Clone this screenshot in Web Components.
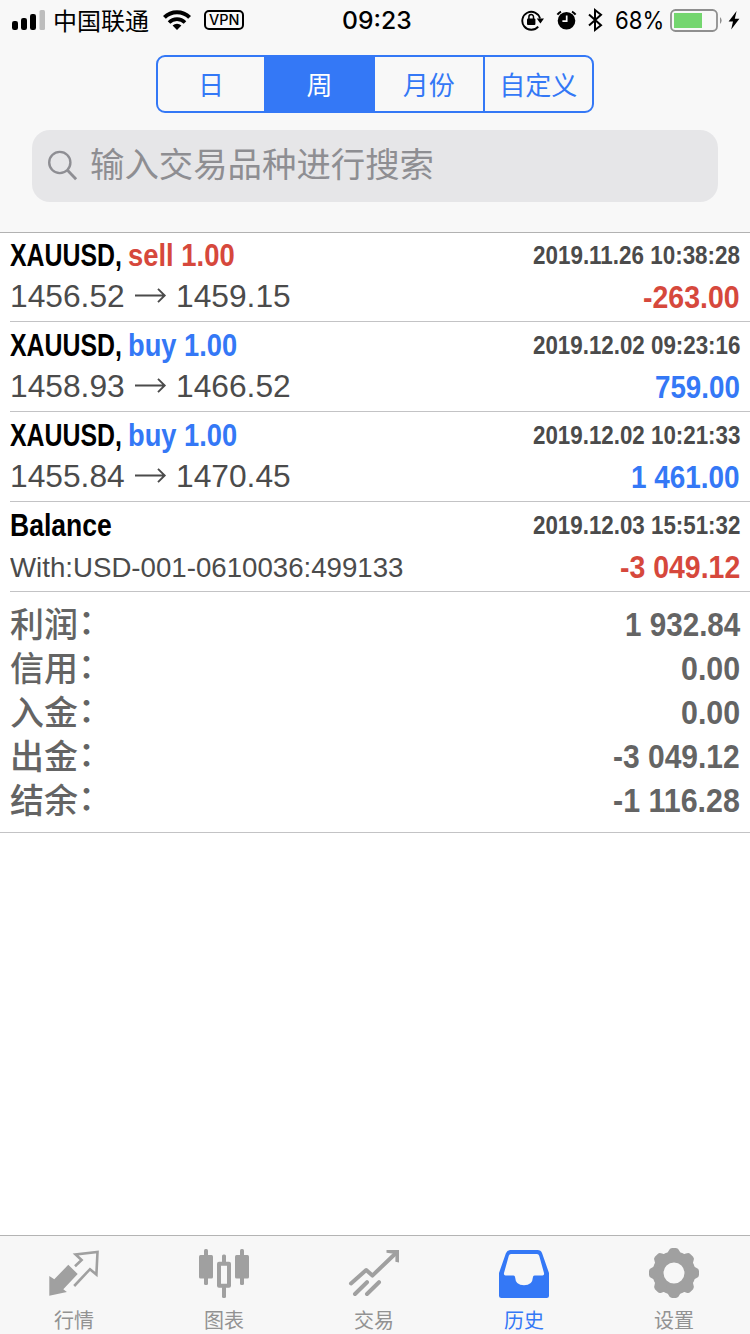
<!DOCTYPE html>
<html lang="zh-CN">
<head>
<meta charset="utf-8">
<title>历史</title>
<style>
html,body{margin:0;height:100%;background:#fff}
body{font-family:"Liberation Sans",Arial,sans-serif;overflow:hidden}
</style>
</head>
<body>
<history-app></history-app>
<script>
const CJK = '"Noto Sans CJK SC",sans-serif';
const fits = new Set();

class Base extends HTMLElement {
  connectedCallback() {
    if (this.shadowRoot) return;
    this.attachShadow({mode: 'open'}).innerHTML = this.render();
  }
  a(n, d = '') { return this.getAttribute(n) ?? d; }
}

/* Text condensed or stretched horizontally to a given advance width. */
class FitText extends Base {
  render() {
    fits.add(this);
    return `<style>:host{display:inline-block;white-space:nowrap;flex:none;width:${this.a('w')}px}
      span{display:inline-block;transform-origin:0 0}</style><span><slot></slot></span>`;
  }
  fit() {
    const s = this.shadowRoot.querySelector('span');
    s.style.transform = `scaleX(${this.a('w') / s.offsetWidth})`;
  }
}
customElements.define('fit-text', FitText);

class StatusBar extends Base {
  render() {
    return `<style>
      :host{display:flex;align-items:center;height:40px;box-sizing:border-box;padding-left:12px;color:#000;font-family:Inter,sans-serif;font-size:24px;line-height:40px}
      svg{flex:none;display:block}
      .cn{font-family:${CJK};margin-left:8px;font-size:24px;line-height:40px;height:40px}
      .vpn{box-sizing:border-box;width:40px;height:20px;border:2px solid #000;border-radius:5px;margin-left:13px;display:flex;justify-content:center;font-size:14px;line-height:16px;font-weight:500}
      .time{margin-left:98px;font-weight:500}
      .time,.pct{line-height:38px;padding-top:2px}
      .pct{margin-left:12px}
    </style>
    <svg width="33" height="40"><rect x="0" y="21" width="6" height="9" rx="2.2"/><rect x="9" y="18" width="6" height="12" rx="2.2"/><rect x="18" y="14" width="6" height="16" rx="2.2"/><rect x="27.5" y="10" width="5.5" height="20" rx="1.5" fill="#bdbdbd"/></svg>
    <fit-text class="cn" w="96">中国联通</fit-text>
    <svg style="margin-left:14px" width="28" height="40" fill="none" stroke="#000" stroke-width="4"><path d="M1.4 17.4a17.8 17.8 0 0 1 25.2 0"/><path d="M6 22.4a11.3 11.3 0 0 1 16 0" stroke-width="3.6"/><path d="M14 30l-4.4-4.4a6.2 6.2 0 0 1 8.8 0z" fill="#000" stroke="none"/></svg>
    <div class="vpn"><fit-text w="31">VPN</fit-text></div>
    <fit-text class="time" w="70">09:23</fit-text>
    <svg style="margin-left:109px" width="23" height="40"><path d="M17.2 26.600A9 9 0 1 1 19 18.500" fill="none" stroke="#000" stroke-width="1.900"/><path d="M15.8 18.400h7.200l-3.600 5z"/><rect x="6" y="18.500" width="8.400" height="6.500" rx="1"/><path d="M7.900 19v-2.100a2.300 2.300 0 0 1 4.600 0v2.100" fill="none" stroke="#000" stroke-width="1.500"/></svg>
    <svg style="margin-left:12px" width="21" height="40"><circle cx="10.5" cy="20.7" r="8.8"/><path d="M1.400 14.600a10 10 0 0 1 3.600-3M19.600 14.600a10 10 0 0 0-3.600-3" fill="none" stroke="#000" stroke-width="2"/><path d="M10.7 15.5v5.600H6.400" fill="none" stroke="#f8f8f8" stroke-width="1.700"/></svg>
    <svg style="margin-left:11px" width="15" height="40" fill="none" stroke="#000" stroke-width="2"><path d="M1 14.6l12 10.6-6 4.8V10l6 4.8L1 25.4"/></svg>
    <fit-text class="pct" w="49">68%</fit-text>
    <svg style="margin-left:6px" width="54" height="40"><rect x="1" y="10" width="46" height="21" rx="4.5" fill="none" stroke="#8f8f8f" stroke-width="1.8"/><rect x="4" y="13" width="28" height="15" fill="#74d66f"/><path d="M50 17q3.4 3.5 0 7z" fill="#8f8f8f"/></svg>
    <svg style="margin-left:4px" width="12" height="40"><path d="M8.6 11L0.6 21.4H5L3.2 29.6 11.4 18.8H6.8z"/></svg>`;
  }
}
customElements.define('status-bar', StatusBar);

class SegmentItem extends Base {
  render() {
    return `<style>
      :host{display:flex;align-items:flex-start;justify-content:center;box-sizing:border-box;height:54px;font:26px/53px ${CJK};color:#3478f6;flex:1}
      :host([selected]){background:#3478f6;color:#fff;flex:0 0 111px}
      :host([divided]){border-left:2px solid #3478f6}
    </style><span><slot></slot></span>`;
  }
}
customElements.define('segment-item', SegmentItem);

class SegmentedControl extends Base {
  render() {
    return `<style>:host{display:flex;box-sizing:border-box;width:438px;height:58px;border:2px solid #3478f6;border-radius:9px;margin:15px auto 0;overflow:hidden}
    ::slotted(:first-child){flex:0 0 106px}</style><slot></slot>`;
  }
}
customElements.define('segmented-control', SegmentedControl);

class SearchField extends Base {
  render() {
    return `<style>
      :host{display:flex;align-items:center;height:72px;margin:17px 32px 0;padding-left:15px;box-sizing:border-box;border-radius:18px;background:#e6e6e8;color:#8e8e92;font:34px/66px ${CJK}}
      svg{margin-right:12px}
      fit-text{height:72px}
    </style><svg width="31" height="32" fill="none" stroke="#8e8e93" stroke-width="2.4"><circle cx="12.8" cy="12.5" r="10.6"/><path d="M20.5 20.3l8.600 9" stroke-width="2.800"/></svg>
    <fit-text w="344"><slot></slot></fit-text>`;
  }
}
customElements.define('search-field', SearchField);

class DealRow extends Base {
  render() {
    const act = this.a('action');
    return `<style>
      :host{display:flex;flex-direction:column;box-sizing:border-box;height:90px;margin-left:10px;padding:3px 10px 0 0;border-bottom:1px solid #c3c3c5;color:#4b4b4b}
      .line{display:flex;justify-content:space-between;height:41px;line-height:40px}
      .head{display:flex;gap:6px;font-size:32px;font-weight:bold;color:#000}
      .date{font-size:26px;font-weight:bold}
      .prices{display:flex;font-size:32px;line-height:40px}
      .prices svg{margin:0 8px 0 10px}
      .note{font-size:28px;line-height:44px}
      .sum{font-size:32px;font-weight:bold;line-height:43px}
      .red{color:#d6483c}.blue{color:#3478f6}
    </style>
    <div class="line"><div class="head"><fit-text w="${this.a('tw')}">${this.a('name')}</fit-text>${act ? `<fit-text class="${this.a('tone')}" w="${this.a('aw')}">${act}</fit-text>` : ''}</div><fit-text class="date" w="207">${this.a('date')}</fit-text></div>
    <div class="line">${this.hasAttribute('from')
      ? `<div class="prices"><fit-text w="115">${this.a('from')}</fit-text><svg width="33" height="40" fill="none" stroke="#4b4b4b" stroke-width="1.9"><path d="M0 19.5h29.500M23 12.800l6.700 6.700-6.700 6.700"/></svg><fit-text w="115">${this.a('to')}</fit-text></div>`
      : `<fit-text class="note" w="393">${this.a('note')}</fit-text>`}<fit-text class="sum ${this.a('result')}" w="${this.a('sw')}">${this.a('sum')}</fit-text></div>`;
  }
}
customElements.define('deal-row', DealRow);

class SummaryRow extends Base {
  render() {
    return `<style>
      :host{display:flex;justify-content:space-between;height:44px;padding:0 10px;color:#646464;line-height:44px}
      .label{font-family:"Liberation Sans",${CJK};font-weight:500;font-size:34px;padding-top:1px;display:flex;height:43px}
      .colon{line-height:38px}
      .value{font-size:34px;font-weight:bold}
    </style><div class="label"><span><slot></slot></span><span class="colon">：</span></div><fit-text class="value" w="${this.a('w')}">${this.a('value')}</fit-text>`;
  }
}
customElements.define('summary-row', SummaryRow);

const ICONS = {
  quotes: `<path fill="currentColor" d="M.3 28l5 3.3L19.3 16.7l9.4 9.3-14.4 15.3 3.6 2.8L.3 47.7z"/><path fill="none" stroke="currentColor" stroke-width="2.6" d="M26 18.2l6.6-6.2-6-5.6L48.5 4 47.4 26.6 41 21.2 25.2 38"/>`,
  chart: `<g fill="currentColor"><rect y="7" width="14" height="23.5" rx="1.5"/><rect x="5" y="1" width="4" height="36" rx="1.5"/><rect x="36" y="7" width="14" height="23.5" rx="1.5"/><rect x="41" y="1" width="4" height="36" rx="1.5"/><rect x="23" y="6.5" width="4" height="9" rx="1.5"/><rect x="23" y="38" width="4" height="12" rx="1.5"/></g><rect x="20" y="15.8" width="10" height="22" fill="none" stroke="currentColor" stroke-width="4" stroke-linejoin="round"/>`,
  trade: `<path fill="none" stroke="currentColor" stroke-width="4" stroke-linecap="round" stroke-linejoin="round" d="M2 35.5L17.2 22l6.2 5.6L47 5M6 46l12-11.8M18 46l12-11.8"/><path fill="currentColor" d="M37.5 2H50v12.5l-3.600-.8V6l-8.900-1.200z"/>`,
  history: `<path fill="currentColor" fill-rule="evenodd" d="M11.5 2h27q3.400 0 4.600 3.200L50 25v22.500q0 2.500-2.500 2.500h-45Q0 50 0 47.500V25L6.900 5.200Q8.100 2 11.500 2zM12 6q-1.700 0-2.200 1.700L5 25q-.5 2.400 1.500 2.400h8q1.500 0 1.700 2.300.3 7.600 8.800 7.600t8.800-7.600q.2-2.300 1.700-2.300h8q2 0 1.500-2.400L40.200 7.700Q39.700 6 38 6z"/>`,
  settings: `<path fill="none" stroke="currentColor" stroke-width="11" d="M41 25a16 16 0 1 1-32 0a16 16 0 1 1 32 0"/>` + [0,45,90,135,180,225,270,315].map(r => `<path fill="currentColor" transform="rotate(${r} 25 25)" d="M16.500 6.500q2.200-1 3.200-3.700Q20.700 0 23 0h4q2.300 0 3.300 2.800 1 2.700 3.200 3.700l-5 4h-7z"/>`).join('')
};

class TabItem extends Base {
  render() {
    return `<style>
      :host{display:flex;flex-direction:column;align-items:center;width:150px;color:#a0a0a0;padding-top:12px;box-sizing:border-box}
      :host([selected]){color:#3478f6}
      svg{display:block;flex:none;overflow:visible}
      span{font:20px/28px ${CJK};margin-top:8px;color:#929292}
      :host([selected]) span{color:#3478f6}
    </style><svg width="50" height="50" viewBox="0 0 50 50">${ICONS[this.a('icon')]}</svg><span><slot></slot></span>`;
  }
}
customElements.define('tab-item', TabItem);

class TabBar extends Base {
  render() {
    return `<style>:host{display:flex;box-sizing:border-box;height:99px;border-top:1px solid #b4b4b4;background:#f7f7f7}
      div{display:flex;margin-left:-1px}</style><div><slot></slot></div>`;
  }
}
customElements.define('tab-bar', TabBar);

class HistoryApp extends Base {
  render() {
    return `<style>
      :host{display:flex;flex-direction:column;width:750px;height:1334px;background:#fff;overflow:hidden}
      header{height:233px;flex:none;box-sizing:border-box;background:#f8f8f8;border-bottom:1px solid #b2b2b2;margin-bottom:-1px}
      main{flex:1}
      section{box-sizing:border-box;height:241px;padding-top:10px;border-bottom:1px solid #c3c3c5}
    </style>
    <header>
      <status-bar></status-bar>
      <segmented-control><segment-item>日</segment-item><segment-item selected>周</segment-item><segment-item>月份</segment-item><segment-item divided>自定义</segment-item></segmented-control>
      <search-field>输入交易品种进行搜索</search-field>
    </header>
    <main>
      <deal-row name="XAUUSD," tw="112" action="sell 1.00" aw="107" tone="red" date="2019.11.26 10:38:28" from="1456.52" to="1459.15" sum="-263.00" sw="97" result="red"></deal-row>
      <deal-row name="XAUUSD," tw="112" action="buy 1.00" aw="109" tone="blue" date="2019.12.02 09:23:16" from="1458.93" to="1466.52" sum="759.00" sw="85" result="blue"></deal-row>
      <deal-row name="XAUUSD," tw="112" action="buy 1.00" aw="109" tone="blue" date="2019.12.02 10:21:33" from="1455.84" to="1470.45" sum="1 461.00" sw="109" result="blue"></deal-row>
      <deal-row name="Balance" tw="102" date="2019.12.03 15:51:32" note="With:USD-001-0610036:499133" sum="-3 049.12" sw="120" result="red"></deal-row>
      <section>
        <summary-row value="1 932.84" w="115">利润</summary-row>
        <summary-row value="0.00" w="59">信用</summary-row>
        <summary-row value="0.00" w="59">入金</summary-row>
        <summary-row value="-3 049.12" w="127">出金</summary-row>
        <summary-row value="-1 116.28" w="127">结余</summary-row>
      </section>
    </main>
    <tab-bar>
      <tab-item icon="quotes">行情</tab-item><tab-item icon="chart">图表</tab-item><tab-item icon="trade">交易</tab-item><tab-item icon="history" selected>历史</tab-item><tab-item icon="settings">设置</tab-item>
    </tab-bar>`;
  }
}
customElements.define('history-app', HistoryApp);
fits.forEach(f => f.fit());
</script>
</body>
</html>
